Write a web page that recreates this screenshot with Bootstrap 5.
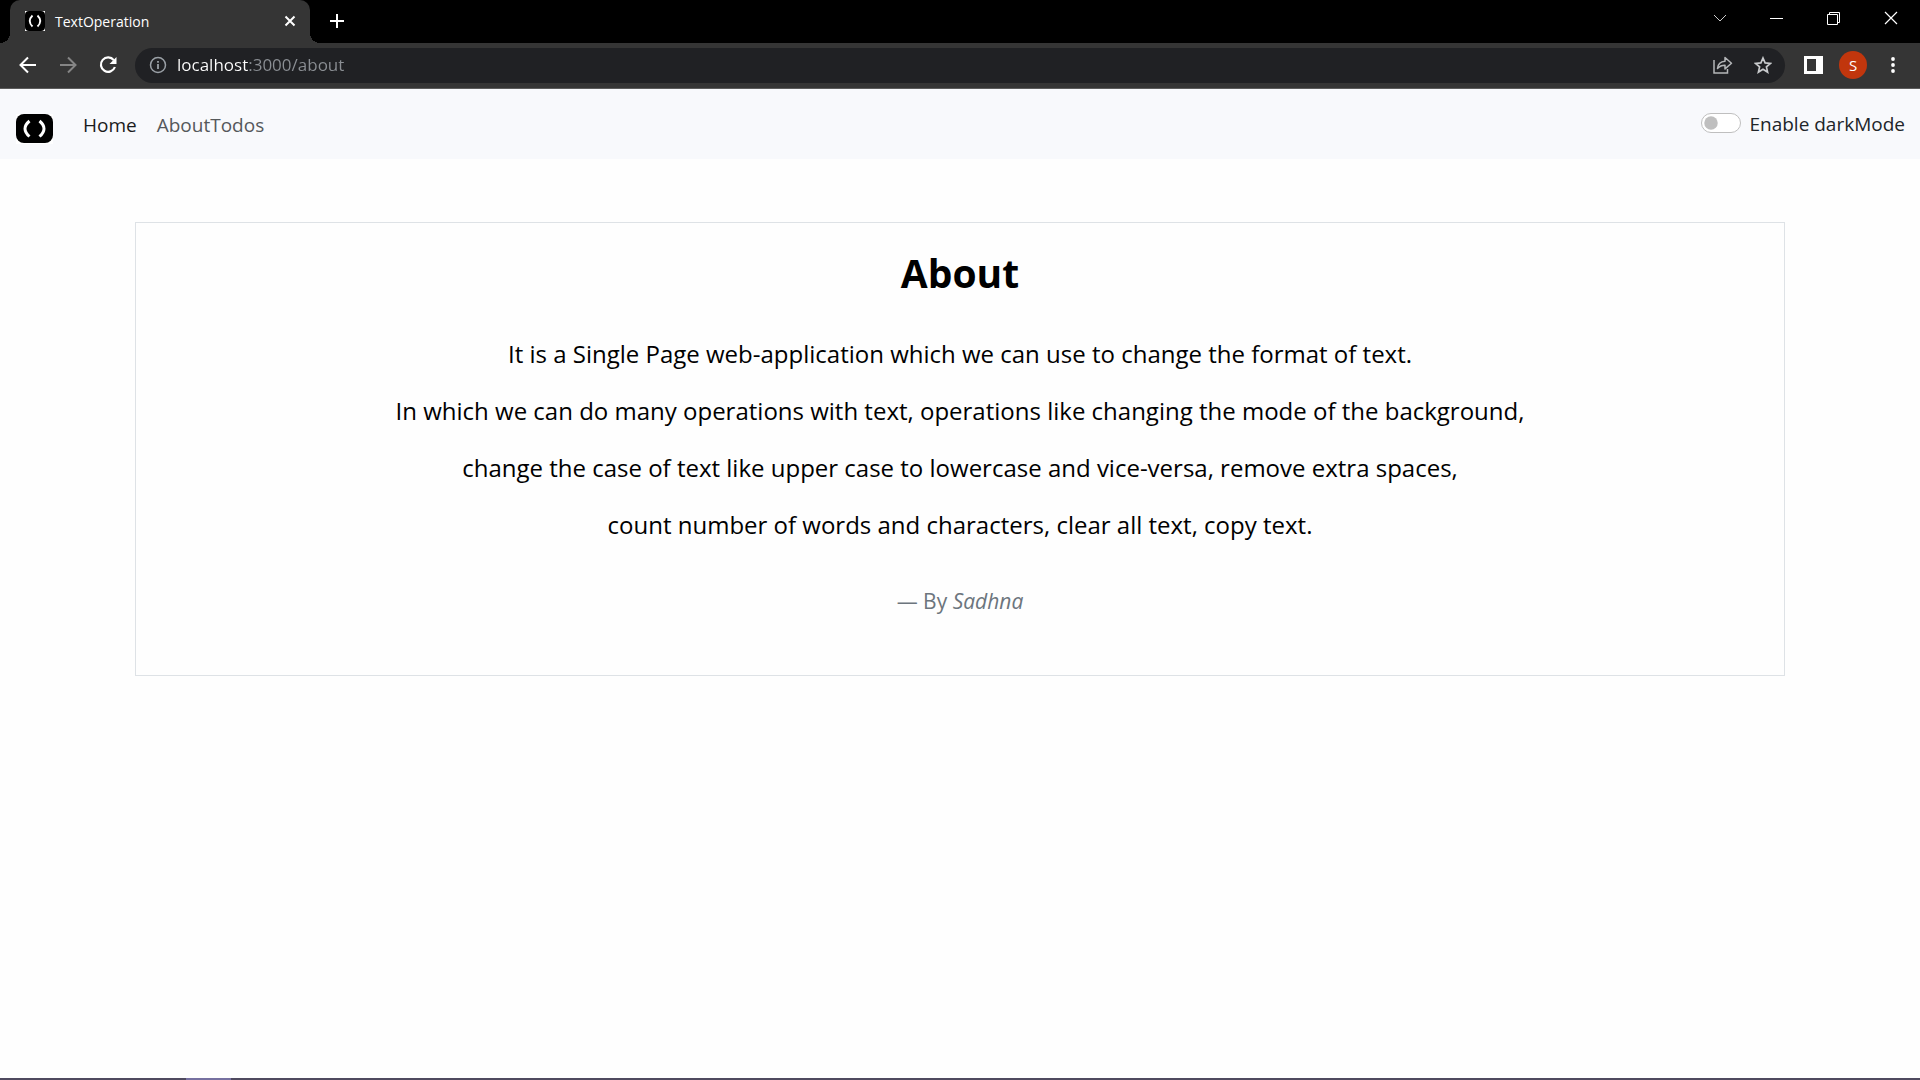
<!DOCTYPE html>
<html lang="en">
<head>
<meta charset="utf-8">
<meta name="viewport" content="width=device-width, initial-scale=1">
<title>TextOperation</title>
<link rel="stylesheet" href="https://cdn.jsdelivr.net/npm/bootstrap@5.3.0/dist/css/bootstrap.min.css">
<style>
  body { font-family: "Open Sans", "Noto Sans", sans-serif; font-size: 18px; background: #fefefe; }
  button svg, a svg { display: block; }
  .plain-btn { background: none; border: 0; padding: 0; color: #fff; display: flex; align-items: center; justify-content: center; }

  /* browser frame */
  .tab-strip { background: #000; height: 43px; padding-left: 10px; padding-right: 1px; }
  .browser-tab { position: relative; width: 300px; background: #353535; color: #fff; border-radius: 10px 10px 0 0; padding: 0 13px 1px 15px; font-size: 14px; }
  .browser-tab::before, .browser-tab::after { content: ""; position: absolute; bottom: 0; width: 10px; height: 10px; }
  .browser-tab::before { left: -10px; background: radial-gradient(circle at 0 0, #000 10px, #353535 10px); }
  .browser-tab::after { right: -10px; background: radial-gradient(circle at 100% 0, #000 10px, #353535 10px); }
  .tab-title { padding-left: 10px; }
  .new-tab { width: 54px; padding-bottom: 1px; }
  .win-btn { width: 57px; height: 36px; }
  .toolbar { background: #353535; height: 46px; border-bottom: 1px solid #5c5c5c; padding: 0 7px 1px 8px; }
  .tool-btn { width: 40px; height: 40px; }
  .address { background: #202124; height: 35px; border-radius: 18px; margin-left: 7px; padding-left: 14px; padding-right: 2px; color: #9aa0a6; }
  .address input { background: linear-gradient(90deg, #fff 72px, #8b8f94 72px); -webkit-background-clip: text; background-clip: text; color: transparent; border: 0; outline: 0; padding: 0; margin-left: 10px; font-size: 17px; line-height: 24px; }
  .avatar { width: 28px; height: 28px; border-radius: 50%; background: #c1360d; font-size: 15px; line-height: 28px; }

  /* page */
  .site-nav { background: #f8f9fc; padding: 10px 15px 10px 16px; height: 70px; }
  .site-nav .brand { margin-right: 20px; padding-top: 9px; }
  .site-nav .nav-link { color: #55585b; padding: 11px 10px 9px; line-height: 30px; font-size: 19px; }
  .site-nav .nav-link.active { color: #1a1b1c; }
  .mode-switch .form-check-input { width: 40px; height: 20px; margin: 0 0 2px; float: none; border-color: #bfbfbf; }
  .mode-label { color: #212529; font-size: 19px; line-height: 30px; }
  .about-box { max-width: 1650px; border: 1px solid #dee2e6; margin: 63px auto 0; padding: 26px 20px 58px; color: #000; }
  .about-box h1 { font-size: 39px; line-height: 48px; font-weight: 700; margin: 0 0 38px; }
  .about-box .about-line { font-size: 24px; line-height: 37px; margin: 0 0 20px; }
  .about-box .about-by { font-size: 21px; line-height: 32px; margin: 42px 0 0; color: #6c757d; }
  .task-edge { height: 2px; background: #4f4a5f; padding-left: 186px; }
  .task-edge span { display: block; width: 45px; height: 2px; background: #7670a0; }
</style>
<script src="https://cdn.jsdelivr.net/npm/bootstrap@5.3.0/dist/js/bootstrap.bundle.min.js"></script>
</head>
<body class="d-flex flex-column min-vh-100">
<header>
  <div class="tab-strip d-flex">
    <div class="browser-tab d-flex align-items-center">
      <svg width="20" height="20" viewBox="0 0 20 20"><path fill="#fff" d="M0 0h20v20H0z"/><rect width="20" height="20" rx="4" fill="#000"/><path d="M7.500 4.500Q2 10 7.500 15.500M12.500 4.500Q18 10 12.500 15.500" fill="none" stroke="#fff" stroke-width="1.800"/></svg>
      <span class="tab-title flex-grow-1">TextOperation</span>
      <button class="plain-btn" aria-label="Close tab"><svg width="14" height="14" viewBox="0 0 14 14"><path d="M2.500 2.500l9 9m0-9l-9 9" stroke="#fff" stroke-width="2"/></svg></button>
    </div>
    <button class="plain-btn new-tab" aria-label="New tab"><svg width="16" height="16" viewBox="0 0 16 16"><path d="M8 1v14M1 8h14" stroke="#fff" stroke-width="2"/></svg></button>
    <div class="d-flex ms-auto">
      <button class="plain-btn win-btn" aria-label="Search tabs"><svg width="14" height="14" viewBox="0 0 14 14"><path d="M1 4l6 6 6-6" fill="none" stroke="#ccc"/></svg></button>
      <button class="plain-btn win-btn" aria-label="Minimize"><svg width="13" height="14" viewBox="0 0 13 14"><path d="M0 7.500h13" stroke="#fff"/></svg></button>
      <button class="plain-btn win-btn" aria-label="Restore"><svg width="13" height="13" viewBox="0 0 13 13"><path d="M.5 2.500h10v10H.500zM2.500 2.500v-2h10v10h-2" fill="none" stroke="#fff"/></svg></button>
      <button class="plain-btn win-btn" aria-label="Close"><svg width="14" height="14" viewBox="0 0 14 14"><path d="M1 1l12 12m0-12L1 13" stroke="#fff" stroke-width="1.200"/></svg></button>
    </div>
  </div>
  <div class="toolbar d-flex align-items-center">
    <button class="plain-btn tool-btn" aria-label="Back"><svg width="18" height="18" viewBox="0 0 18 18"><path d="M17 9H2.500M9 1.500L1.500 9 9 16.500" fill="none" stroke="#fff" stroke-width="2"/></svg></button>
    <button class="plain-btn tool-btn" aria-label="Forward"><svg width="18" height="18" viewBox="0 0 18 18"><path d="M1 9h14.500M9 1.500L16.500 9 9 16.500" fill="none" stroke="#858585" stroke-width="2"/></svg></button>
    <button class="plain-btn tool-btn" aria-label="Reload"><svg width="18" height="18" viewBox="0 0 18 18"><path d="M14.800 4.200A7.200 7.200 0 1 0 15.900 11" fill="none" stroke="#fff" stroke-width="2.200"/><path d="M17.500 1v7h-7z" fill="#fff"/></svg></button>
    <div class="address d-flex align-items-center flex-grow-1">
      <svg width="18" height="18" viewBox="0 0 18 18"><circle cx="9" cy="9" r="7.500" fill="none" stroke="#9aa0a6" stroke-width="1.500"/><path d="M9 8v5M9 5v1.800" stroke="#9aa0a6" stroke-width="1.800"/></svg>
      <input class="flex-grow-1" type="text" value="localhost:3000/about" aria-label="Address">
      <button class="plain-btn tool-btn" aria-label="Share"><svg width="20" height="18" viewBox="0 0 20 18"><path d="M1 4v13h13.500v-4" fill="none" stroke="#b4b6b8" stroke-width="1.500"/><path d="M4.500 12.500C5 8 8 5.500 12 5.300V1.500l6.500 5.700-6.500 5.700V9.300C8.500 9.300 6.500 10.300 4.500 12.500z" fill="none" stroke="#b4b6b8" stroke-width="1.500" stroke-linejoin="round"/></svg></button>
      <button class="plain-btn tool-btn" aria-label="Bookmark"><svg width="18" height="18" viewBox="0 0 18 18"><path d="M9 2l2.100 4.900 5.300.5-4 3.500 1.200 5.200L9 13.300l-4.600 2.800 1.200-5.200-4-3.500 5.300-.5z" fill="none" stroke="#c8cacc" stroke-width="1.700"/></svg></button>
    </div>
    <button class="plain-btn tool-btn ms-2" aria-label="Side panel"><svg width="19" height="18" viewBox="0 0 19 18"><path fill="#fff" fill-rule="evenodd" d="M0 0h19v18H0zM3 3v12h9V3z"/></svg></button>
    <button class="plain-btn tool-btn" aria-label="Profile"><span class="avatar">S</span></button>
    <button class="plain-btn tool-btn" aria-label="Menu"><svg width="4" height="18" viewBox="0 0 4 18"><g fill="#fff"><circle cx="2" cy="3" r="1.900"/><circle cx="2" cy="9" r="1.900"/><circle cx="2" cy="15" r="1.900"/></g></svg></button>
  </div>
</header>

<nav class="site-nav d-flex align-items-center">
  <a href="#" class="brand" aria-label="TextOperation"><svg width="37" height="30" viewBox="0 0 37 30"><path fill="#fff" d="M0 0h37v30H0z"/><rect width="37" height="29" rx="8" fill="#000"/><path d="M13.500 7Q4.500 14.500 13.500 22.500M23.500 7Q32.500 14.500 23.500 22.500" fill="none" stroke="#fff" stroke-width="3"/></svg></a>
  <div class="d-flex me-auto">
    <a class="nav-link active" href="#">Home</a>
    <a class="nav-link" href="#about">AboutTodos</a>
  </div>
  <div class="form-check form-switch mode-switch d-flex align-items-center p-0 m-0 gap-2">
    <input class="form-check-input" type="checkbox" role="switch" id="darkMode">
    <label class="mode-label" for="darkMode">Enable darkMode</label>
  </div>
</nav>

<main class="container-fluid" id="about">
  <section class="about-box text-center">
    <h1>About</h1>
    <p class="about-line">It is a Single Page web-application which we can use to change the format of text.</p>
    <p class="about-line">In which we can do many operations with text, operations like changing the mode of the background,</p>
    <p class="about-line">change the case of text like upper case to lowercase and vice-versa, remove extra spaces,</p>
    <p class="about-line">count number of words and characters, clear all text, copy text.</p>
    <p class="about-by">— By <cite>Sadhna</cite></p>
  </section>
</main>
<footer class="task-edge mt-auto"><span></span></footer>
</body>
</html>
